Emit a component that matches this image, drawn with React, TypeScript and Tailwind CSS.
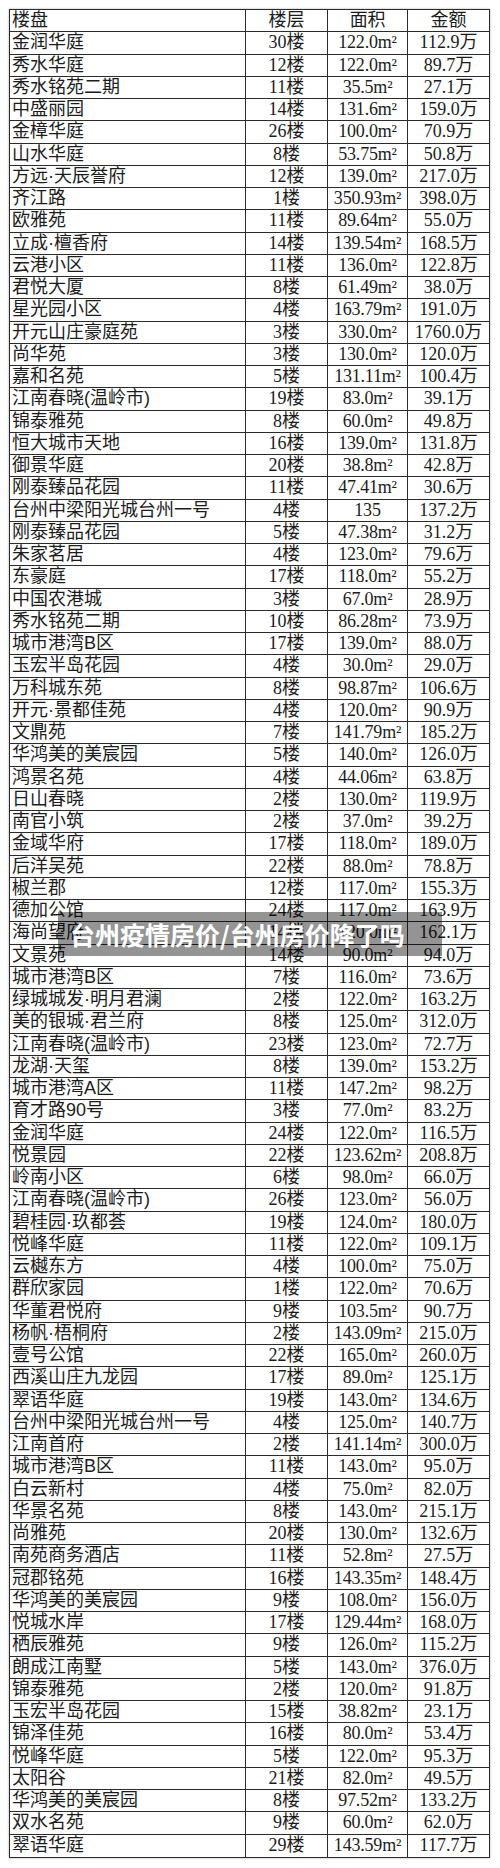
import React from "react";

const data: [string, string, string, string][] = [
  ["金润华庭", "30楼", "122.0m²", "112.9万"],
  ["秀水华庭", "12楼", "122.0m²", "89.7万"],
  ["秀水铭苑二期", "11楼", "35.5m²", "27.1万"],
  ["中盛丽园", "14楼", "131.6m²", "159.0万"],
  ["金樟华庭", "26楼", "100.0m²", "70.9万"],
  ["山水华庭", "8楼", "53.75m²", "50.8万"],
  ["方远·天辰誉府", "12楼", "139.0m²", "217.0万"],
  ["齐江路", "1楼", "350.93m²", "398.0万"],
  ["欧雅苑", "11楼", "89.64m²", "55.0万"],
  ["立成·檀香府", "14楼", "139.54m²", "168.5万"],
  ["云港小区", "11楼", "136.0m²", "122.8万"],
  ["君悦大厦", "8楼", "61.49m²", "38.0万"],
  ["星光园小区", "4楼", "163.79m²", "191.0万"],
  ["开元山庄豪庭苑", "3楼", "330.0m²", "1760.0万"],
  ["尚华苑", "3楼", "130.0m²", "120.0万"],
  ["嘉和名苑", "5楼", "131.11m²", "100.4万"],
  ["江南春晓(温岭市)", "19楼", "83.0m²", "39.1万"],
  ["锦泰雅苑", "8楼", "60.0m²", "49.8万"],
  ["恒大城市天地", "16楼", "139.0m²", "131.8万"],
  ["御景华庭", "20楼", "38.8m²", "42.8万"],
  ["刚泰臻品花园", "11楼", "47.41m²", "30.6万"],
  ["台州中梁阳光城台州一号", "4楼", "135", "137.2万"],
  ["刚泰臻品花园", "5楼", "47.38m²", "31.2万"],
  ["朱家茗居", "4楼", "123.0m²", "79.6万"],
  ["东豪庭", "17楼", "118.0m²", "55.2万"],
  ["中国农港城", "3楼", "67.0m²", "28.9万"],
  ["秀水铭苑二期", "10楼", "86.28m²", "73.9万"],
  ["城市港湾B区", "17楼", "139.0m²", "88.0万"],
  ["玉宏半岛花园", "4楼", "30.0m²", "29.0万"],
  ["万科城东苑", "8楼", "98.87m²", "106.6万"],
  ["开元·景都佳苑", "4楼", "120.0m²", "90.9万"],
  ["文鼎苑", "7楼", "141.79m²", "185.2万"],
  ["华鸿美的美宸园", "5楼", "140.0m²", "126.0万"],
  ["鸿景名苑", "4楼", "44.06m²", "63.8万"],
  ["日山春晓", "2楼", "130.0m²", "119.9万"],
  ["南官小筑", "2楼", "37.0m²", "39.2万"],
  ["金域华府", "17楼", "118.0m²", "189.0万"],
  ["后洋吴苑", "22楼", "88.0m²", "78.8万"],
  ["椒兰郡", "12楼", "117.0m²", "155.3万"],
  ["德加公馆", "24楼", "117.0m²", "163.9万"],
  ["海尚望府", "14楼", "120.0m²", "162.1万"],
  ["文景苑", "14楼", "90.0m²", "94.0万"],
  ["城市港湾B区", "7楼", "116.0m²", "73.6万"],
  ["绿城城发·明月君澜", "2楼", "122.0m²", "163.2万"],
  ["美的银城·君兰府", "8楼", "125.0m²", "312.0万"],
  ["江南春晓(温岭市)", "23楼", "123.0m²", "72.7万"],
  ["龙湖·天玺", "8楼", "139.0m²", "153.2万"],
  ["城市港湾A区", "11楼", "147.2m²", "98.2万"],
  ["育才路90号", "3楼", "77.0m²", "83.2万"],
  ["金润华庭", "24楼", "122.0m²", "116.5万"],
  ["悦景园", "22楼", "123.62m²", "208.8万"],
  ["岭南小区", "6楼", "98.0m²", "66.0万"],
  ["江南春晓(温岭市)", "26楼", "123.0m²", "56.0万"],
  ["碧桂园·玖都荟", "19楼", "124.0m²", "180.0万"],
  ["悦峰华庭", "11楼", "122.0m²", "109.1万"],
  ["云樾东方", "4楼", "100.0m²", "75.0万"],
  ["群欣家园", "1楼", "122.0m²", "70.6万"],
  ["华董君悦府", "9楼", "103.5m²", "90.7万"],
  ["杨帆·梧桐府", "2楼", "143.09m²", "215.0万"],
  ["壹号公馆", "22楼", "165.0m²", "260.0万"],
  ["西溪山庄九龙园", "17楼", "89.0m²", "125.1万"],
  ["翠语华庭", "19楼", "143.0m²", "134.6万"],
  ["台州中梁阳光城台州一号", "4楼", "125.0m²", "140.7万"],
  ["江南首府", "2楼", "141.14m²", "300.0万"],
  ["城市港湾B区", "11楼", "143.0m²", "95.0万"],
  ["白云新村", "4楼", "75.0m²", "82.0万"],
  ["华景名苑", "8楼", "143.0m²", "215.1万"],
  ["尚雅苑", "20楼", "130.0m²", "132.6万"],
  ["南苑商务酒店", "11楼", "52.8m²", "27.5万"],
  ["冠郡铭苑", "16楼", "143.35m²", "148.4万"],
  ["华鸿美的美宸园", "9楼", "108.0m²", "156.0万"],
  ["悦城水岸", "17楼", "129.44m²", "168.0万"],
  ["栖辰雅苑", "9楼", "126.0m²", "115.2万"],
  ["朗成江南墅", "5楼", "143.0m²", "376.0万"],
  ["锦泰雅苑", "2楼", "120.0m²", "91.8万"],
  ["玉宏半岛花园", "15楼", "38.82m²", "23.1万"],
  ["锦泽佳苑", "16楼", "80.0m²", "53.4万"],
  ["悦峰华庭", "5楼", "122.0m²", "95.3万"],
  ["太阳谷", "21楼", "82.0m²", "49.5万"],
  ["华鸿美的美宸园", "8楼", "97.52m²", "133.2万"],
  ["双水名苑", "9楼", "60.0m²", "62.0万"],
  ["翠语华庭", "29楼", "143.59m²", "117.7万"],
];

function Row({ cells, last }: { cells: [string, string, string, string]; last: boolean }) {
  return (
    <div
      className={
        last
          ? "grid grid-cols-[236px_82px_80px_1fr] h-[22.25px]"
          : "grid grid-cols-[236px_82px_80px_1fr] h-[22.25px] border-b-[1.5px] border-[#2b2b2b]"
      }
    >
      <div className="border-r-[1.5px] border-[#2b2b2b] pl-[2px] text-[18px] leading-[21px] whitespace-nowrap font-['Liberation_Sans','Noto_Sans_CJK_SC',sans-serif]">
        {cells[0]}
      </div>
      <div className="border-r-[1.5px] border-[#2b2b2b] text-center text-[18px] leading-[21px] whitespace-nowrap font-['Liberation_Serif','Noto_Sans_CJK_SC',serif]">
        {cells[1]}
      </div>
      <div className="border-r-[1.5px] border-[#2b2b2b] text-center text-[18px] leading-[21px] whitespace-nowrap tracking-[-0.2px] font-['Liberation_Serif','Noto_Sans_CJK_SC',serif]">
        {cells[2]}
      </div>
      <div className="text-center text-[18px] leading-[21px] whitespace-nowrap font-['Liberation_Serif','Noto_Sans_CJK_SC',serif]">
        {cells[3]}
      </div>
    </div>
  );
}

export default function App() {
  return (
    <div className="relative w-[500px] h-[1868px] bg-white text-[#1c1c1c] pt-[9px] pl-[9px]">
      <div className="w-[481px] border-[1.5px] border-[#2b2b2b] shadow-[0_0_2px_rgba(0,0,0,0.35)]">
        <Row cells={["楼盘", "楼层", "面积", "金额"]} last={false} />
        {data.map((r, i) => (
          <Row key={i} cells={r} last={i === data.length - 1} />
        ))}
      </div>
      <div className="absolute left-[58px] top-[912px] w-[384px] h-[44px] bg-[rgba(0,0,0,0.42)] flex items-center pl-[12px]">
        <span className="text-white font-bold text-[25px] leading-none font-['Noto_Sans_CJK_SC',sans-serif]">
          台州疫情房价/台州房价降了吗
        </span>
      </div>
    </div>
  );
}
